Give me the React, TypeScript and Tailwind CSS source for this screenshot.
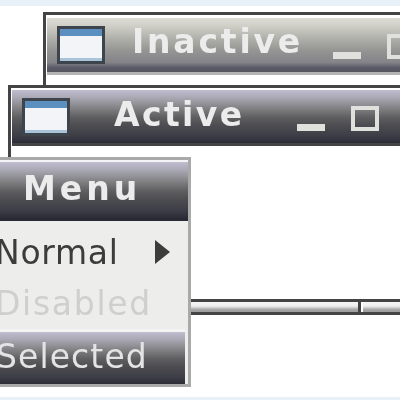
const titleGradient =
  'bg-[linear-gradient(to_bottom,#c0bed0_0%,#a8a7b2_15%,#8a8a8e_30%,#5e5e60_52%,#4c4c50_68%,#3c3c46_88%,#2c2c38_100%)]';
const inactiveGradient =
  'bg-[linear-gradient(to_bottom,#dcdcd4_0%,#cfcfc8_15%,#b4b4ae_35%,#959593_60%,#84848a_82%,#5a5a66_92%,#55555f_100%)]';
const handleGradient = 'bg-[linear-gradient(to_bottom,#f6f6f6_0%,#f0f0f0_40%,#a8a8a8_75%,#9c9c9c_100%)]';

function WindowIcon() {
  return (
    <div className="w-[48px] h-[38px] border-[3px] border-[#3e444c] bg-[#f2f4f8] flex flex-col justify-between shrink-0">
      <div className="h-[7px] bg-[#5b8fc0]" />
      <div className="h-[3px] bg-[#a9c4d8]" />
    </div>
  );
}

function TitleButtons() {
  return (
    <div className="flex items-end gap-[26px] shrink-0">
      <div className="w-[28px] h-[7px] bg-[#e0e0dc]" />
      <div className="w-[28px] h-[25px] border-[4px] border-[#e0e0dc]" />
    </div>
  );
}

export default function App() {
  return (
    <div className="relative w-[400px] h-[400px] overflow-hidden bg-white font-['DejaVu_Sans',sans-serif] blur-[0.4px]">
      <div className="absolute left-0 top-0 w-full h-[6px] bg-[#e8f0f8]" />
      <div className="absolute left-0 top-[397px] w-full h-[3px] bg-[#e8f0f8]" />

      {/* inactive window */}
      <div className="absolute left-[43px] top-[12px] w-[400px] h-[90px] border-l-[3px] border-t-[3px] border-[#444444] bg-white pl-[1px] pt-[3px]">
        <div className={`h-[57px] border-b-[3px] border-[#b4b4b4] ${inactiveGradient} pl-[10px] flex items-center`}>
          <WindowIcon />
          <span className="ml-[27px] w-[201px] text-[33px] leading-none font-bold tracking-[2.8px] text-[#ececec] -mt-[8px]">
            Inactive
          </span>
          <div className="-mb-[2px]">
            <TitleButtons />
          </div>
        </div>
      </div>

      {/* active window */}
      <div className="absolute left-[8px] top-[85px] w-[420px] h-[230px] border-[3px] border-r-0 border-[#444444] bg-white">
        <div className={`h-[56px] mt-[2px] ml-[1px] border-b-[3px] border-[#444444] ${titleGradient} pl-[10px] flex items-center`}>
          <WindowIcon />
          <span className="ml-[44px] w-[183px] text-[33px] leading-none font-bold tracking-[2.4px] text-[#ececec] -mt-[5px]">
            Active
          </span>
          <div className="-mb-[3px]">
            <TitleButtons />
          </div>
        </div>
        <div className="absolute left-0 right-0 top-[211px] h-[13px] border-t-[3px] border-[#444444] flex">
          <div className={`w-[347px] h-full ${handleGradient}`} />
          <div className="w-[3px] h-full bg-[#444444]" />
          <div className={`flex-1 h-full ml-[2px] ${handleGradient}`} />
        </div>
      </div>

      {/* menu */}
      <div className="absolute left-[-4px] top-[157px] w-[195px] h-[230px] border-[3px] border-[#a9a9a9] bg-[#ededeb] flex flex-col">
        <div className={`h-[61px] shrink-0 border-t-[2px] border-[#f4f4f4] border-b-[3px] border-b-[#2a2a34] ${titleGradient} pl-[24px] flex items-center`}>
          <span className="text-[33px] leading-none font-bold tracking-[4px] text-[#ececec] -mt-[3px]">Menu</span>
        </div>
        <div className="h-[54px] shrink-0 pt-[8px] flex items-center text-[33px] leading-none tracking-[0.7px] text-[#3c3c3c]">
          <span className="-ml-[4px] w-[160px] whitespace-nowrap">Normal</span>
          <svg width="15" height="24" viewBox="0 0 15 24" className="shrink-0">
            <path d="M0 0 L15 12 L0 24 Z" fill="#3c3c3c" />
          </svg>
        </div>
        <div className="h-[50px] shrink-0 pt-[6px] flex items-center text-[33px] leading-none tracking-[1.7px] text-[#cfcfcb]">
          <span className="-ml-[4px]">Disabled</span>
        </div>
        <div className="h-[4px] shrink-0" />
        <div className={`flex-1 ml-[-2px] mr-[3px] border-t-[3px] border-[#f4f4f4] ${titleGradient} flex items-center text-[33px] leading-none tracking-[1.1px] text-[#e4e4e4]`}>
          <span className="-mt-[4px] -ml-[1px]">Selected</span>
        </div>
      </div>
    </div>
  );
}
